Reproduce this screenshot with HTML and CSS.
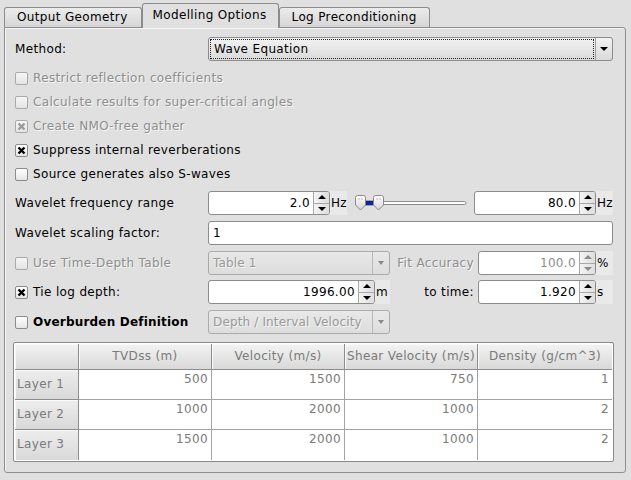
FILE: index.html
```html
<!DOCTYPE html>
<html>
<head>
<meta charset="utf-8">
<link rel="stylesheet" href="styles.css">
</head>
<body>
<div class="window">
  <div class="tabbar">
    <div class="tab">Output Geometry</div>
    <div class="tab active">Modelling Options</div>
    <div class="tab">Log Preconditioning</div>
  </div>
  <div class="panel">
    <div class="row">
      <div class="lab">Method:</div>
      <div class="combo">
        <span class="ctext"><span class="focus">Wave Equation</span></span>
        <span class="carrow"><i class="tri-dn"></i></span>
      </div>
    </div>

    <div class="row chkrow first dis"><span class="box"></span>Restrict reflection coefficients</div>
    <div class="row chkrow dis"><span class="box"></span>Calculate results for super-critical angles</div>
    <div class="row chkrow dis"><span class="box"><svg width="11" height="11" viewBox="0 0 11 11"><path d="M2.5 2.5L8.5 8.5M8.5 2.5L2.5 8.5" stroke="#9a9a9a" stroke-width="2.4"/></svg></span>Create NMO-free gather</div>
    <div class="row chkrow"><span class="box"><svg width="11" height="11" viewBox="0 0 11 11"><path d="M2.5 2.5L8.5 8.5M8.5 2.5L2.5 8.5" stroke="#000" stroke-width="2.4"/></svg></span>Suppress internal reverberations</div>
    <div class="row chkrow"><span class="box"></span>Source generates also S-waves</div>

    <div class="row m5">
      <div class="lab">Wavelet frequency range</div>
      <div class="spin w122"><span class="val">2.0</span><span class="btns"><i><b class="tri-up"></b></i><i><b class="tri-dn"></b></i></span></div>
      <div class="unit u17">Hz</div>
      <svg class="slider" width="113" height="18" viewBox="0 0 113 18">
        <defs>
          <linearGradient id="hg" x1="0" y1="0" x2="0" y2="1">
            <stop offset="0" stop-color="#ffffff"/>
            <stop offset="1" stop-color="#d6d6d6"/>
          </linearGradient>
        </defs>
        <rect x="28" y="7.5" width="84" height="3" rx="1.5" fill="#fff" stroke="#8a8a8a"/>
        <rect x="10" y="7" width="10" height="4" fill="#12249a" stroke="#0a1560" stroke-width="0.6"/>
        <path d="M1.5 3.5Q1.5 1.5 3.5 1.5H9.5Q11.5 1.5 11.5 3.5V11L6.5 16L1.5 11Z" fill="url(#hg)" stroke="#8a8a8a"/>
        <path d="M19.5 3.5Q19.5 1.5 21.5 1.5H27.5Q29.5 1.5 29.5 3.5V11L24.5 16L19.5 11Z" fill="url(#hg)" stroke="#8a8a8a"/>
        <circle cx="5" cy="5" r="0.7" fill="#aaa"/><circle cx="8" cy="5" r="0.7" fill="#aaa"/>
        <circle cx="23" cy="5" r="0.7" fill="#aaa"/><circle cx="26" cy="5" r="0.7" fill="#aaa"/>
      </svg>
      <div class="spin w122 ml7"><span class="val">80.0</span><span class="btns"><i><b class="tri-up"></b></i><i><b class="tri-dn"></b></i></span></div>
      <div class="unit u17">Hz</div>
    </div>

    <div class="row m6">
      <div class="lab">Wavelet scaling factor:</div>
      <div class="field">1</div>
    </div>

    <div class="row m6">
      <div class="lab chklab dis"><span class="box"></span>Use Time-Depth Table</div>
      <div class="combo w182 disabled">
        <span class="ctext plain">Table 1</span>
        <span class="carrow"><i class="tri-sm"></i></span>
      </div>
      <div class="rlab dis">Fit Accuracy</div>
      <div class="spin w118 dspin"><span class="val">100.0</span><span class="btns"><i><b class="tri-up"></b></i><i><b class="tri-dn"></b></i></span></div>
      <div class="unit u17">%</div>
    </div>

    <div class="row m5">
      <div class="lab chklab"><span class="box"><svg width="11" height="11" viewBox="0 0 11 11"><path d="M2.5 2.5L8.5 8.5M8.5 2.5L2.5 8.5" stroke="#000" stroke-width="2.4"/></svg></span>Tie log depth:</div>
      <div class="spin w167"><span class="val">1996.00</span><span class="btns"><i><b class="tri-up"></b></i><i><b class="tri-dn"></b></i></span></div>
      <div class="unit u15">m</div>
      <div class="rlab">to time:</div>
      <div class="spin w118"><span class="val">1.920</span><span class="btns"><i><b class="tri-up"></b></i><i><b class="tri-dn"></b></i></span></div>
      <div class="unit u17">s</div>
    </div>

    <div class="row m6">
      <div class="lab chklab"><span class="box"></span><strong>Overburden Definition</strong></div>
      <div class="combo w182 disabled">
        <span class="ctext plain">Depth / Interval Velocity</span>
        <span class="carrow"><i class="tri-sm"></i></span>
      </div>
    </div>

    <div class="tbl">
      <div class="hd corner"></div>
      <div class="hd">TVDss (m)</div>
      <div class="hd">Velocity (m/s)</div>
      <div class="hd">Shear Velocity (m/s)</div>
      <div class="hd">Density (g/cm^3)</div>

      <div class="rh">Layer 1</div>
      <div class="cell">500</div>
      <div class="cell">1500</div>
      <div class="cell">750</div>
      <div class="cell">1</div>

      <div class="rh">Layer 2</div>
      <div class="cell">1000</div>
      <div class="cell">2000</div>
      <div class="cell">1000</div>
      <div class="cell">2</div>

      <div class="rh">Layer 3</div>
      <div class="cell">1500</div>
      <div class="cell">2000</div>
      <div class="cell">1000</div>
      <div class="cell">2</div>
    </div>
  </div>
</div>
</body>
</html>
```

FILE: styles.css
```css
html, body {
  margin: 0;
  padding: 0;
}
body {
  background: #e0e0e0;
  font-family: "DejaVu Sans", sans-serif;
  font-size: 12px;
  letter-spacing: 0.35px;
  color: #000;
  width: 631px;
  height: 480px;
  overflow: hidden;
}
.window {
  padding-left: 4px;
  width: 622px;
}

/* tabs */
.tabbar {
  display: flex;
  align-items: flex-end;
  height: 27px;
  position: relative;
  z-index: 2;
}
.tab {
  height: 20px;
  box-sizing: border-box;
  border: 1px solid #8c8c8c;
  border-bottom: none;
  border-radius: 3px 3px 0 0;
  padding: 0 12px;
  line-height: 19px;
  background: linear-gradient(#ececec, #d6d6d6);
  white-space: nowrap;
}
.tab:first-child { padding: 0 13px 0 12px; }
.tab.active {
  height: 25px;
  margin-bottom: -1px;
  background: #e0e0e0;
  line-height: 23px;
  padding: 0 11px 0 10px;
}

/* panel */
.panel {
  height: 446px;
  box-sizing: border-box;
  border: 1px solid #8f8f8f;
  border-radius: 0 3px 3px 3px;
  box-shadow: inset 1px 1px 0 #f4f4f4;
  padding: 9px 12px 0 10px;
  display: flex;
  flex-direction: column;
}
.row {
  display: flex;
  align-items: center;
  height: 24px;
  flex: none;
}
.m5 { margin-top: 5px; }
.m6 { margin-top: 6px; }
.m7 { margin-top: 7px; }
.first { margin-top: 5px; }
.lab {
  width: 193px;
  flex: none;
  display: flex;
  align-items: center;
  white-space: nowrap;
}
.dis {
  color: #8e8e8e;
  text-shadow: 1px 1px 0 #f6f6f6;
}

/* checkbox */
.box {
  width: 13px;
  height: 13px;
  box-sizing: border-box;
  border: 1px solid #8c8c8c;
  border-radius: 2px;
  background: linear-gradient(#ffffff, #e6e6e6);
  margin-right: 5px;
  display: flex;
  align-items: center;
  justify-content: center;
  flex: none;
}
.dis .box {
  border-color: #a9a9a9;
  background: linear-gradient(#f6f6f6, #e4e4e4);
}
strong { font-weight: bold; letter-spacing: 0.2px; }

/* combo */
.combo {
  flex: 1;
  height: 24px;
  box-sizing: border-box;
  border: 1px solid #8c8c8c;
  border-radius: 3px;
  background: linear-gradient(#f3f3f3, #dadada);
  display: flex;
}
.w182 { flex: none; width: 182px; }
.ctext {
  flex: 1;
  padding: 1px;
  display: flex;
}
.focus {
  flex: 1;
  border: 1px dotted #222;
  padding-left: 3px;
  line-height: 18px;
}
.ctext.plain {
  padding: 0 0 0 4px;
  line-height: 22px;
  white-space: nowrap;
  overflow: hidden;
  letter-spacing: 0.15px;
}
.carrow {
  width: 16px;
  border-left: 1px solid #9c9c9c;
  display: flex;
  align-items: center;
  justify-content: center;
}
.combo.disabled {
  border-color: #ababab;
  background: linear-gradient(#e8e8e8, #dddddd);
  color: #999;
  text-shadow: 1px 1px 0 #f4f4f4;
}
.combo.disabled .carrow { border-left-color: #b8b8b8; width: 16px; flex: none; }

.tri-dn, .tri-up, .tri-sm {
  display: block;
  width: 0;
  height: 0;
  border-left: 4px solid transparent;
  border-right: 4px solid transparent;
}
.tri-dn { border-top: 4px solid #000; }
.tri-up { border-bottom: 4px solid #000; }
.tri-sm {
  border-left-width: 3px;
  border-right-width: 3px;
  border-top: 4px solid #888;
}

/* spinbox */
.spin {
  height: 24px;
  box-sizing: border-box;
  border: 1px solid #8c8c8c;
  border-radius: 3px;
  background: #fff;
  display: flex;
  flex: none;
  overflow: hidden;
}
.w122 { width: 122px; }
.w118 { width: 118px; }
.w167 { width: 167px; }
.ml7 { margin-left: 7px; }
.val {
  flex: 1;
  text-align: right;
  padding-right: 3px;
  line-height: 22px;
}
.btns {
  width: 15px;
  flex: none;
  display: flex;
  flex-direction: column;
  border-left: 1px solid #a8a8a8;
  background: linear-gradient(90deg, #f4f4f4, #dedede);
}
.btns i {
  flex: 1;
  display: flex;
  align-items: center;
  justify-content: center;
}
.btns i + i { border-top: 1px solid #a8a8a8; }
.dspin .val { color: #8e8e8e; }
.dspin .tri-up { border-bottom-color: #8a8a8a; }
.dspin .tri-dn { border-top-color: #8a8a8a; }

.unit {
  height: 24px;
  line-height: 24px;
  background: #e9e9e9;
  padding-left: 1px;
  box-sizing: border-box;
  flex: none;
  overflow: hidden;
  white-space: nowrap;
}
.u17 { width: 17px; }
.u15 { width: 15px; }
.slider {
  display: block;
  margin-left: 7px;
  flex: none;
}
.rlab {
  flex: 1;
  min-width: 0;
  text-align: right;
  padding-right: 4px;
  white-space: nowrap;
}

.field {
  flex: 1;
  height: 24px;
  box-sizing: border-box;
  border: 1px solid #8c8c8c;
  border-radius: 3px;
  background: #fff;
  padding-left: 4px;
  line-height: 22px;
}

/* table */
.tbl {
  flex: none;
  margin: 8px 0 0 -2px;
  width: 601px;
  height: 120px;
  box-sizing: border-box;
  border: 1px solid #8a8a8a;
  border-radius: 2px;
  padding: 1px;
  background: #fff;
  display: grid;
  grid-template-columns: 64px 133px 133px 133px 134px;
  grid-template-rows: 26px 30px 30px 30px;
  color: #7a7a7a;
}
.hd, .rh, .cell {
  box-sizing: border-box;
  white-space: nowrap;
  overflow: hidden;
}
.hd {
  background: linear-gradient(#f3f3f3, #d9d9d9);
  border-right: 1px solid #8c8c8c;
  border-bottom: 1px solid #8c8c8c;
  box-shadow: inset 1px 1px 0 #fafafa;
  text-align: center;
  line-height: 25px;
}
.rh {
  background: linear-gradient(#ededed, #d9d9d9);
  border-right: 1px solid #8c8c8c;
  border-bottom: 1px solid #8c8c8c;
  box-shadow: inset 1px 1px 0 #fafafa;
  padding-left: 2px;
  line-height: 29px;
}
.cell {
  border-right: 1px solid #a4a4a4;
  border-bottom: 1px solid #a4a4a4;
  text-align: right;
  padding-right: 3px;
  line-height: 18px;
}
.tbl > :nth-child(5n) { border-right: none; }
.tbl > :nth-last-child(-n+5) { border-bottom: none; }
```
